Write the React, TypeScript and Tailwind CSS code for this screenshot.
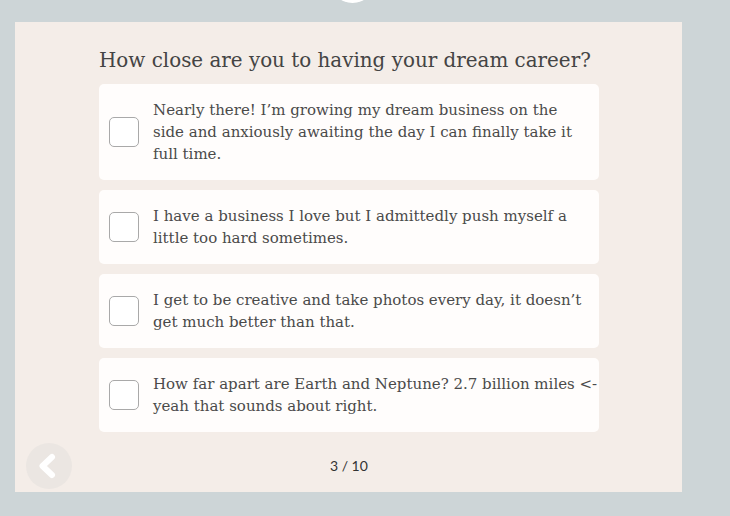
import React from "react";

const options: string[][] = [
  [
    "Nearly there! I\u2019m growing my dream business on the",
    "side and anxiously awaiting the day I can finally take it",
    "full time.",
  ],
  [
    "I have a business I love but I admittedly push myself a",
    "little too hard sometimes.",
  ],
  [
    "I get to be creative and take photos every day, it doesn\u2019t",
    "get much better than that.",
  ],
  [
    "How far apart are Earth and Neptune? 2.7 billion miles <-",
    "yeah that sounds about right.",
  ],
];

export default function App() {
  return (
    <div className="relative w-[730px] h-[516px] bg-[#cdd5d7] overflow-hidden pt-[22px] pl-[15px]">
      <div className="absolute left-[330px] top-[-42px] w-[45px] h-[45px] rounded-full bg-white" />
      <div className="w-[667px] h-[470px] bg-[#f4ede8] flex flex-col pl-[84px] pt-[27px] relative">
        <h1
          className="text-[19.9px] leading-[24px] text-[#444] mb-[11px] whitespace-nowrap"
          style={{ fontFamily: '"DejaVu Serif", serif' }}
        >
          How close are you to having your dream career?
        </h1>
        <div className="flex flex-col gap-[10px] w-[500px]">
          {options.map((lines, i) => (
            <div
              key={i}
              className="bg-[#fffdfc] rounded-[5px] flex items-center py-[15px] pl-[10px] pr-[8px]"
            >
              <div className="w-[30px] h-[30px] shrink-0 rounded-[5px] border border-[#a9a9a9] bg-white" />
              <div
                className="ml-[14px] text-[15px] leading-[22px] text-[#4a4a4a] whitespace-nowrap"
                style={{ fontFamily: '"DejaVu Serif", serif' }}
              >
                {lines.map((l, j) => (
                  <div key={j}>{l}</div>
                ))}
              </div>
            </div>
          ))}
        </div>
        <div className="absolute left-[11px] top-[421px] w-[46px] h-[46px] rounded-full bg-[#ebe6e2]">
          <svg width="46" height="46" viewBox="0 0 46 46">
            <path d="M26 14 L16.5 23 L26 32" fill="none" stroke="#ffffff" strokeWidth="6" strokeLinecap="round" strokeLinejoin="round" />
          </svg>
        </div>
        <div
          className="absolute left-[315px] top-[433px] text-[14px] text-[#333]"
          style={{ fontFamily: 'Lato, sans-serif' }}
        >
          3 / 10
        </div>
      </div>
    </div>
  );
}
